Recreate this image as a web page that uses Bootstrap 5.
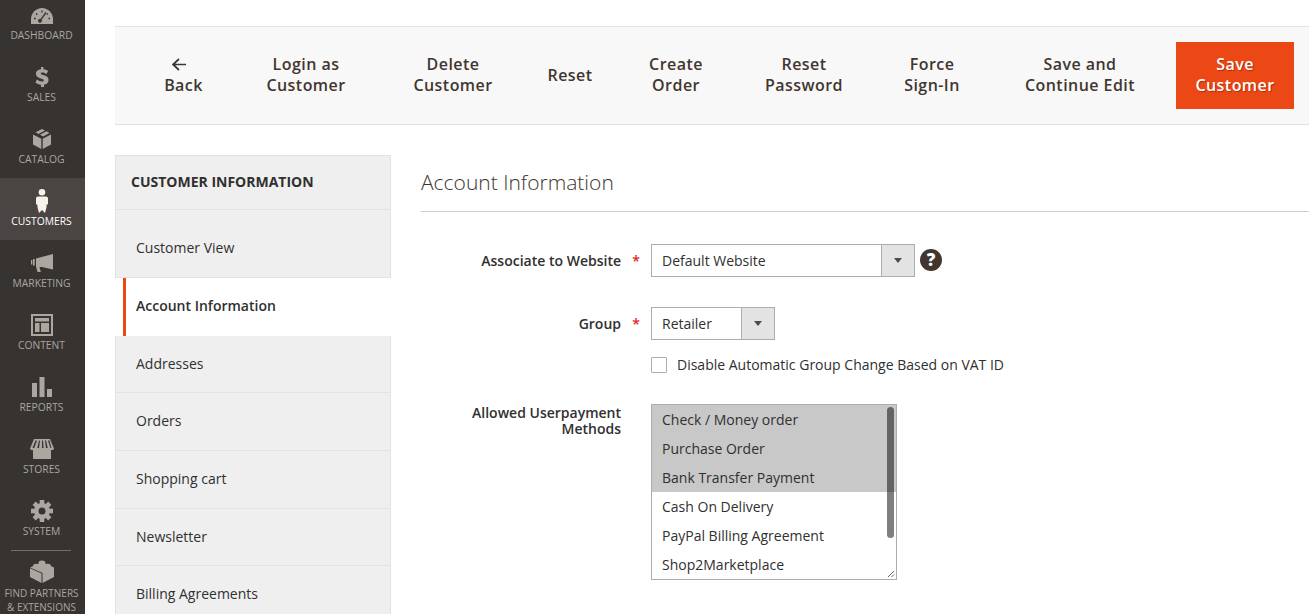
<!DOCTYPE html>
<html lang="en">
<head>
<meta charset="UTF-8">
<title>Account Information</title>
<link href="https://cdn.jsdelivr.net/npm/bootstrap@5.3.3/dist/css/bootstrap.min.css" rel="stylesheet">
<script src="https://cdn.jsdelivr.net/npm/bootstrap@5.3.3/dist/js/bootstrap.bundle.min.js"></script>
<style>
html, body { height: 614px; overflow: hidden; }
body { font-family: "Open Sans", sans-serif; color: #303030; font-size: 14px; background: #fff; }
.admin-shell { height: 614px; width: 1309px; }

/* left menu */
.admin-menu { width: 85px; flex: none; background: #373330; color: #aaa6a0; height: 614px; overflow: hidden; }
.menu-item { height: 62px; flex: none; color: #aaa6a0; text-decoration: none; font-size: 10.3px; line-height: 12px; padding: 8px 2px 0 0; white-space: nowrap; }
.menu-item:first-child { height: 54px; padding-top: 0; }
.menu-item.current { background: #4a4542; color: #fff; }
.menu-icon { height: 29px; display: flex; align-items: center; justify-content: center; }
.menu-item:first-child .menu-icon { padding-top: 3px; }
.menu-icon svg { fill: #aaa6a0; display: block; }
.menu-item.current svg { fill: #f7f3eb; }
.menu-rule { width: 60px; height: 1px; background: #736e69; margin: 0 0 0 11px; flex: none; }
.menu-partners { font-size: 10px; line-height: 14px; color: #aaa6a0; padding: 6px 2px 0 0; white-space: nowrap; }

/* page */
.page-area { flex: 1; padding: 26px 0 0 30px; min-width: 0; }
.action-bar { height: 99px; background: #f8f8f8; border-top: 1px solid #e3e3e3; border-bottom: 1px solid #e3e3e3; padding: 0 15px 1px 0; }
.action-btn { font-size: 16px; line-height: 21px; font-weight: 600; color: #41362f; letter-spacing: .45px; text-align: center; background: none; border: 0; padding: 0; flex: none; }
.back-arrow { display: block; height: 21px; margin-left: 57px; }
.btn-back { width: 137px; }
.btn-login { width: 108px; }
.btn-delete { width: 186px; }
.btn-reset { width: 48px; }
.btn-create { width: 164px; }
.btn-password { width: 92px; }
.btn-force { width: 164px; }
.btn-continue { width: 132px; }
.save-btn { width: 118px; height: 67px; background: #ec4815; color: #fff; text-shadow: 1px 1px 1px rgba(0,0,0,.3); margin-left: 30px; }

.content-row { padding-top: 30px; }
.side-tabs { width: 276px; flex: none; }
.tabs-title { height: 55px; background: #efefef; border: 1px solid #e3e3e3; padding: 0 15px; font-weight: 700; font-size: 14px; line-height: 51px; color: #303030; }
.tab-link { display: block; height: 57.7px; color: #303030; text-decoration: none; padding-left: 20px; line-height: 56px; background: #efefef; border-left: 1px solid #e3e3e3; border-right: 1px solid #e3e3e3; border-bottom: 1px solid #e3e3e3; }
.tab-link.first-tab { height: 68px; line-height: 76px; }
.tab-link.active-tab { background: #fff; font-weight: 600; border-left: 3px solid #ec4815; border-right: 0; border-bottom: 0; margin-left: 8px; padding-left: 10px; }

.form-area { flex: 1; padding-left: 30px; min-width: 0; }
.form-title { font-size: 21px; font-weight: 300; line-height: 27px; margin: 0; padding-top: 14px; border-bottom: 1px solid #cfcfcf; box-sizing: content-box; height: 30px; padding-bottom: 12px; color: #41362f; }
.form-line { display: flex; }
.line-website { margin-top: 32px; }
.line-group { margin-top: 30px; }
.line-check { margin-top: 14px; }
.line-methods { margin-top: 29px; }
.form-label-col { width: 230px; flex: none; text-align: right; font-weight: 600; padding: 9px 30px 0 0; position: relative; line-height: 16px; color: #303030; }
.form-label-col.top-label { padding-top: 1px; }
.req-star { position: absolute; right: 11px; top: 8px; color: #e22626; font-size: 14px; line-height: 18px; }
.fake-select { height: 33px; border: 1px solid #adadad; display: flex; background: #fff; line-height: 31px; }
.select-wide { width: 264px; }
.select-short { width: 124px; }
.fake-select .sel-text { flex: 1; padding-left: 10px; }
.sel-arrow { width: 33px; flex: none; background: #e3e3e3; border-left: 1px solid #adadad; position: relative; }
.sel-arrow::after { content: ""; position: absolute; left: 12px; top: 13px; border-left: 4.5px solid transparent; border-right: 4.5px solid transparent; border-top: 5px solid #514943; }
.help-mark { width: 22px; height: 22px; border-radius: 50%; background: #41362f; color: #fff; font-weight: 800; font-size: 17px; line-height: 22px; text-align: center; margin-left: 5px; margin-top: 5px; }
.check-box { width: 16px; height: 16px; border: 1px solid #adadad; background: #fff; flex: none; border-radius: 1px; margin-right: 2px; }
.multi-box { width: 246px; height: 176px; border: 1px solid #adadad; position: relative; overflow: hidden; }
.multi-opt { height: 29px; line-height: 29px; padding-left: 10px; white-space: nowrap; }
.multi-opt.picked { background: #c8c8c8; }
.scroll-thumb { position: absolute; right: 2px; top: 2px; width: 7px; height: 131px; background: rgba(0,0,0,.5); border-radius: 4px; }
.resize-grip { position: absolute; right: 1px; bottom: 1px; }
</style>
</head>
<body>
<div class="admin-shell d-flex">
    <nav class="admin-menu d-flex flex-column text-center">
        <a class="menu-item" href="#">
            <div class="menu-icon"><svg width="22" height="16" viewBox="0 0 22 16"><path d="M11 0C5 0 0 5 0 11v5h22v-5C22 5 17 0 11 0z"/><path d="M8.800 13.200L15 4.500M3 10.500h1.800M5 5.500l1.300 1.300M11 2.500v2M16.800 5.500l-1 1M17.500 10.500H19" stroke="#373330" stroke-width="1.300" fill="none"/><circle cx="9" cy="12.800" r="2" fill="#373330"/></svg></div>
            DASHBOARD
        </a>
        <a class="menu-item" href="#">
            <div class="menu-icon"><svg width="14" height="20" viewBox="0 0 14 20"><path d="M6 0h2.400v2.300c1.900.2 3.400.8 4.600 1.700l-1.400 2.900c-1.300-.9-2.800-1.500-4.200-1.500-1 0-1.600.4-1.600 1 0 .8 1 1.100 2.700 1.700 2.900.9 5.100 2 5.100 4.800 0 2.700-1.900 4.300-4.600 4.700V20H6v-2.300c-2.200-.2-4.200-1-5.600-2.200l1.600-2.900c1.500 1.200 3.200 1.900 4.900 1.900 1.200 0 1.900-.4 1.900-1.200 0-.9-1.100-1.300-2.900-1.900C3 10.600.9 9.500.9 6.700.9 4.300 2.800 2.700 6 2.300z"/></svg></div>
            SALES
        </a>
        <a class="menu-item" href="#">
            <div class="menu-icon"><svg width="18" height="20" viewBox="0 0 18 20"><path d="M9 0l3 1.500-6.500 3.400-3-1.600zM13.500 2.300L16.500 4 10 7.500 7 5.800zM0 5.400l8.300 4.300V20L0 15.600zM18 5.400v10.200L9.700 20V9.700z"/></svg></div>
            CATALOG
        </a>
        <a class="menu-item current" href="#">
            <div class="menu-icon"><svg width="12" height="24" viewBox="0 0 12 24"><circle cx="6" cy="3.300" r="3.300"/><path d="M2 7.500h8c1.100 0 2 .9 2 2V15l-1.500 1v2.500L9 24 6 21 3 24l-1.500-5.500V16L0 15V9.500c0-1.100.9-2 2-2z"/></svg></div>
            CUSTOMERS
        </a>
        <a class="menu-item" href="#">
            <div class="menu-icon"><svg width="22" height="18" viewBox="0 0 22 18"><path d="M22 0v15.500L11 13H8.500l1.300 5H6.500L5 12.500V4.500zM3.700 5v6.500H2V5zM1.300 6v4.500H0V6z"/></svg></div>
            MARKETING
        </a>
        <a class="menu-item" href="#">
            <div class="menu-icon"><svg width="22" height="22" viewBox="0 0 22 22"><path fill-rule="evenodd" d="M0 0h22v22H0zM2 2v18h18V2zM4 4h14v3.500H4zM4 9h4.500v9H4zM10 9h8v9h-8z"/></svg></div>
            CONTENT
        </a>
        <a class="menu-item" href="#">
            <div class="menu-icon"><svg width="20" height="20" viewBox="0 0 20 20"><path d="M0 6h5v14H0zM7.500 0h5v20h-5zM15 12h5v8h-5z"/></svg></div>
            REPORTS
        </a>
        <a class="menu-item" href="#">
            <div class="menu-icon"><svg width="24" height="20" viewBox="0 0 24 20"><path fill-rule="evenodd" d="M4 0h16l4 9.500c-.5 1.400-1.700 1.900-3 1.500V20H3v-9C1.700 11.400.5 10.900 0 9.500zM5.500 1.500L2.500 9h1.700l2.800-7.500zM9 1.500L7.300 9H9l1-7.500zM12 1.500V9h1.500l-.5-7.500zM15 1.500L16 9h1.700L16 1.500zM18 1.500L20.500 9h1L19.500 1.500z"/></svg></div>
            STORES
        </a>
        <a class="menu-item" href="#">
            <div class="menu-icon"><svg width="22" height="22" viewBox="0 0 22 22"><path fill-rule="evenodd" d="M11 3a8 8 0 1 0 0 16 8 8 0 0 0 0-16zM11 7.500a3.500 3.500 0 1 1 0 7 3.500 3.500 0 0 1 0-7z"/><rect x="8.700" y="0" width="4.600" height="4"/><rect x="8.700" y="18" width="4.600" height="4"/><rect x="0" y="8.700" width="4" height="4.600"/><rect x="18" y="8.700" width="4" height="4.600"/><rect x="8.700" y="0" width="4.600" height="4" transform="rotate(45 11 11)"/><rect x="8.700" y="0" width="4.600" height="4" transform="rotate(135 11 11)"/><rect x="8.700" y="0" width="4.600" height="4" transform="rotate(225 11 11)"/><rect x="8.700" y="0" width="4.600" height="4" transform="rotate(315 11 11)"/></svg></div>
            SYSTEM
        </a>
        <div class="menu-rule"></div>
        <div class="menu-partners">
            <div class="menu-icon"><svg width="24" height="23" viewBox="0 0 24 23"><path d="M12 2L24 7.500v9.500L12.500 23V12.500L24 7.500 12 12.800 0 7.500zM0 8.300l11.500 5.200V23L0 17z"/><ellipse cx="12" cy="2.800" rx="3.400" ry="2.300"/><ellipse cx="6.500" cy="6" rx="3.400" ry="2.300"/><ellipse cx="17.500" cy="6" rx="3.400" ry="2.300"/><ellipse cx="12" cy="8.800" rx="3.400" ry="2.300"/></svg></div>
            FIND PARTNERS<br>&amp; EXTENSIONS
        </div>
    </nav>

    <main class="page-area">
        <div class="action-bar d-flex align-items-center">
            <button class="action-btn btn-back"><svg class="back-arrow" width="16" height="21" viewBox="0 0 16 21"><path d="M7 5L1 10.500 7 16M1 10.500h13" fill="none" stroke="#41362f" stroke-width="1.700"/></svg>Back</button>
            <button class="action-btn btn-login">Login as<br>Customer</button>
            <button class="action-btn btn-delete">Delete<br>Customer</button>
            <button class="action-btn btn-reset">Reset</button>
            <button class="action-btn btn-create">Create<br>Order</button>
            <button class="action-btn btn-password">Reset<br>Password</button>
            <button class="action-btn btn-force">Force<br>Sign-In</button>
            <button class="action-btn btn-continue">Save and<br>Continue Edit</button>
            <button class="action-btn save-btn">Save<br>Customer</button>
        </div>

        <div class="content-row d-flex">
            <aside class="side-tabs">
                <div class="tabs-title">CUSTOMER INFORMATION</div>
                <a class="tab-link first-tab" href="#">Customer View</a>
                <a class="tab-link active-tab" href="#">Account Information</a>
                <a class="tab-link" href="#">Addresses</a>
                <a class="tab-link" href="#">Orders</a>
                <a class="tab-link" href="#">Shopping cart</a>
                <a class="tab-link" href="#">Newsletter</a>
                <a class="tab-link" href="#">Billing Agreements</a>
            </aside>
            <section class="form-area">
                <h2 class="form-title">Account Information</h2>
                <div class="form-line line-website">
                    <div class="form-label-col">Associate to Website<span class="req-star">*</span></div>
                    <div class="fake-select select-wide"><span class="sel-text">Default Website</span><span class="sel-arrow"></span></div>
                    <div class="help-mark">?</div>
                </div>
                <div class="form-line line-group">
                    <div class="form-label-col">Group<span class="req-star">*</span></div>
                    <div class="fake-select select-short"><span class="sel-text">Retailer</span><span class="sel-arrow"></span></div>
                </div>
                <div class="form-line line-check">
                    <div class="form-label-col"></div>
                    <div class="d-flex align-items-center gap-2"><span class="check-box"></span><span>Disable Automatic Group Change Based on VAT ID</span></div>
                </div>
                <div class="form-line line-methods">
                    <div class="form-label-col top-label">Allowed Userpayment<br>Methods</div>
                    <div class="multi-box">
                        <div class="multi-opt picked">Check / Money order</div>
                        <div class="multi-opt picked">Purchase Order</div>
                        <div class="multi-opt picked">Bank Transfer Payment</div>
                        <div class="multi-opt">Cash On Delivery</div>
                        <div class="multi-opt">PayPal Billing Agreement</div>
                        <div class="multi-opt">Shop2Marketplace</div>
                        <div class="scroll-thumb"></div>
                        <svg class="resize-grip" width="8" height="8" viewBox="0 0 8 8"><path d="M1 7L7 1M4.500 7L7 4.500" stroke="#666" stroke-width="1"/></svg>
                    </div>
                </div>
            </section>
        </div>
    </main>
</div>
</body>
</html>
